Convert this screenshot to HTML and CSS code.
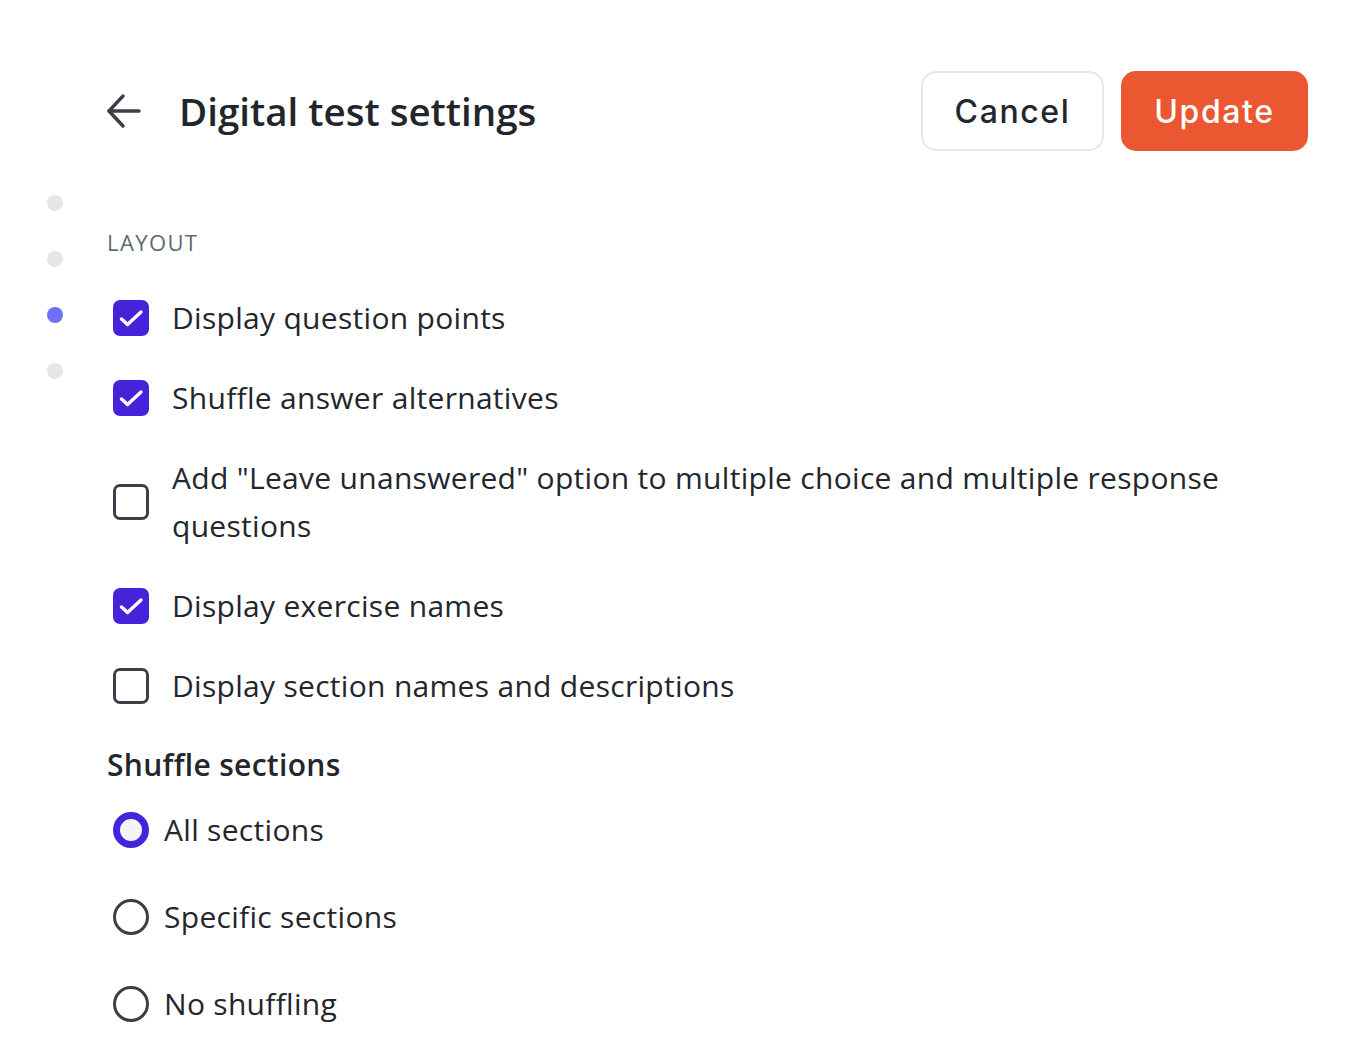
FILE: index.html
```html
<!DOCTYPE html>
<html lang="en">
<head>
<meta charset="utf-8">
<title>Digital test settings</title>
<link rel="stylesheet" href="styles.css">
</head>
<body>
<div class="page">
  <header class="header">
    <button class="back" aria-label="Back">
      <svg width="34" height="34" viewBox="0 0 34 34" fill="none" stroke="#3a3f47" stroke-width="3.4" stroke-linecap="round" stroke-linejoin="round">
        <path d="M32 17H2"/>
        <path d="M16 2L2 17l14 15"/>
      </svg>
    </button>
    <h1 class="title">Digital test settings</h1>
    <div class="actions">
      <button class="btn btn-cancel">Cancel</button>
      <button class="btn btn-update">Update</button>
    </div>
  </header>

  <div class="body">
    <nav class="rail">
      <span class="dot"></span>
      <span class="dot"></span>
      <span class="dot dot-active"></span>
      <span class="dot"></span>
    </nav>

    <main class="content">
      <div class="section-label">LAYOUT</div>

      <div class="options">
        <label class="check-row">
          <span class="box checked">
            <svg viewBox="0 0 36 36" width="36" height="36"><path d="M8.5 19l6 5.5L28 12" fill="none" stroke="#fff" stroke-width="3.4" stroke-linecap="round" stroke-linejoin="round"/></svg>
          </span>
          <span class="check-text">Display question points</span>
        </label>
        <label class="check-row">
          <span class="box checked">
            <svg viewBox="0 0 36 36" width="36" height="36"><path d="M8.5 19l6 5.5L28 12" fill="none" stroke="#fff" stroke-width="3.4" stroke-linecap="round" stroke-linejoin="round"/></svg>
          </span>
          <span class="check-text">Shuffle answer alternatives</span>
        </label>
        <label class="check-row">
          <span class="box"></span>
          <span class="check-text">Add "Leave unanswered" option to multiple choice and multiple response questions</span>
        </label>
        <label class="check-row">
          <span class="box checked">
            <svg viewBox="0 0 36 36" width="36" height="36"><path d="M8.5 19l6 5.5L28 12" fill="none" stroke="#fff" stroke-width="3.4" stroke-linecap="round" stroke-linejoin="round"/></svg>
          </span>
          <span class="check-text">Display exercise names</span>
        </label>
        <label class="check-row">
          <span class="box"></span>
          <span class="check-text">Display section names and descriptions</span>
        </label>
      </div>

      <h2 class="group-title">Shuffle sections</h2>

      <div class="radios">
        <label class="radio-row">
          <span class="radio selected"></span>
          <span class="radio-text">All sections</span>
        </label>
        <label class="radio-row">
          <span class="radio"></span>
          <span class="radio-text">Specific sections</span>
        </label>
        <label class="radio-row">
          <span class="radio"></span>
          <span class="radio-text">No shuffling</span>
        </label>
      </div>
    </main>
  </div>
</div>
</body>
</html>
```

FILE: styles.css
```css
* {
  box-sizing: border-box;
}

html, body {
  margin: 0;
  background: #ffffff;
}

body {
  font-family: "Open Sans", "Lato", sans-serif;
  color: #23262c;
}

.page {
  padding: 71px 48px 0 47px;
}

/* Top bar */
.header {
  display: flex;
  align-items: center;
  height: 80px;
  margin-left: 59px;
}

.back {
  display: flex;
  align-items: center;
  justify-content: center;
  width: 36px;
  height: 36px;
  padding: 0;
  border: 0;
  background: none;
  cursor: pointer;
}

.title {
  margin: 0 0 0 37px;
  font-size: 38.5px;
  font-weight: 600;
  color: #22252b;
  line-height: 1;
}

.actions {
  margin-left: auto;
  display: flex;
  gap: 17px;
}

.btn {
  height: 80px;
  border-radius: 15px;
  font-family: "Inter", "Lato", sans-serif;
  font-size: 32px;
  font-weight: 500;
  letter-spacing: 1.6px;
  padding: 0;
  cursor: pointer;
}

.btn-cancel {
  width: 183px;
  background: #ffffff;
  border: 2px solid #e6e7e9;
  color: #23262c;
}

.btn-update {
  width: 187px;
  background: #ea5730;
  border: 0;
  color: #ffffff;
}

/* Body: step rail + settings column */
.body {
  display: flex;
  margin-top: 44px;
}

.rail {
  display: flex;
  flex-direction: column;
  gap: 40px;
  width: 60px;
  flex-shrink: 0;
}

.dot {
  display: block;
  width: 16px;
  height: 16px;
  border-radius: 50%;
  background: #e6e6e8;
}

.dot-active {
  background: #7070f7;
}

.content {
  flex: 1;
  padding-top: 32px;
}

.section-label {
  font-size: 22px;
  line-height: 30px;
  letter-spacing: 1.4px;
  color: #5b6a79;
}

.options {
  display: flex;
  flex-direction: column;
  gap: 32px;
  margin-top: 37px;
}

.check-row {
  display: flex;
  align-items: center;
  padding-left: 6px;
  max-width: 1140px;
}

.box {
  flex-shrink: 0;
  width: 36px;
  height: 36px;
  border-radius: 7px;
  border: 3.5px solid #3b4048;
  margin-right: 23px;
  display: flex;
}

.box.checked {
  background: #4523db;
  border: 0;
}

.check-text {
  font-size: 30px;
  line-height: 48px;
  letter-spacing: 0.3px;
  color: #23262c;
}

.group-title {
  margin: 35px 0 0;
  font-size: 30px;
  line-height: 40px;
  letter-spacing: 0.3px;
  font-weight: 600;
  color: #23262c;
}

.radios {
  display: flex;
  flex-direction: column;
  gap: 39px;
  margin-top: 21px;
}

.radio-row {
  display: flex;
  align-items: center;
  padding-left: 6px;
}

.radio {
  flex-shrink: 0;
  width: 36px;
  height: 36px;
  border-radius: 50%;
  border: 3.5px solid #3b4048;
  margin-right: 15px;
}

.radio.selected {
  border: 7.5px solid #4523db;
  background: #f3f4f6;
}

.radio-text {
  font-size: 30px;
  line-height: 48px;
  letter-spacing: 0.3px;
  color: #23262c;
}
```
